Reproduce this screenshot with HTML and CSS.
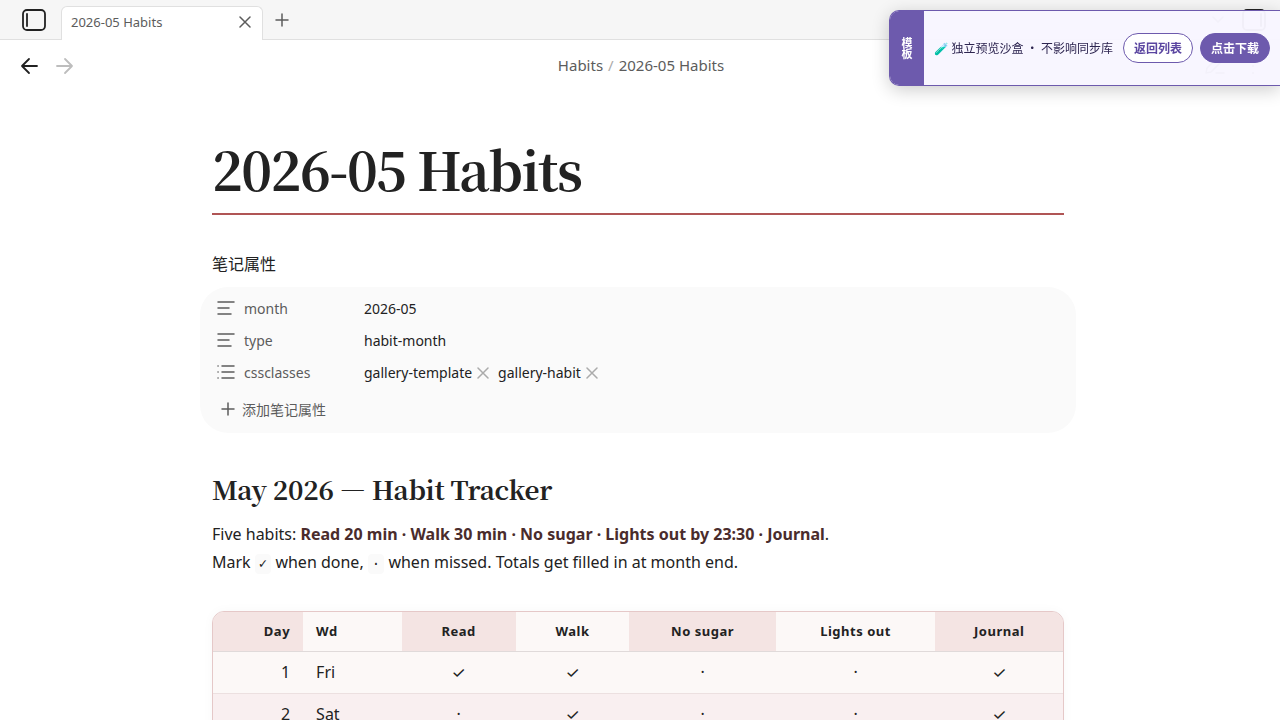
FILE: index.html
```html
<!DOCTYPE html>
<html lang="zh-CN">
<head>
    <meta charset="UTF-8">
    <meta name="viewport" content="width=device-width, initial-scale=1.0">
    <title>2026-05 Habits</title>
    <link rel="stylesheet" href="styles.css">
</head>
<body>
    <div class="app">
        <header class="tab-bar">
            <button class="icon-btn sidebar-btn" aria-label="Toggle left sidebar">
                <svg class="panel" width="26" height="24" viewBox="0 0 26 24"><rect x="2" y="2" width="22" height="20" rx="4"/><path d="M6 6v12"/></svg>
            </button>
            <div class="tab">
                <span class="tab-title">2026-05 Habits</span>
                <button class="icon-btn" aria-label="Close tab">
                    <svg class="thin" width="12" height="12" viewBox="0 0 12 12"><path d="M1 1l10 10M11 1L1 11"/></svg>
                </button>
            </div>
            <button class="icon-btn new-tab" aria-label="New tab">
                <svg class="thin" width="14" height="14" viewBox="0 0 14 14"><path d="M7 1v12M1 7h12"/></svg>
            </button>
            <div class="tab-bar-right">
                <button class="icon-btn" aria-label="Tab list">
                    <svg class="thin" width="12" height="8" viewBox="0 0 12 8"><path d="M1 1l5 5 5-5"/></svg>
                </button>
                <button class="icon-btn sidebar-btn" aria-label="Toggle right sidebar">
                    <svg class="panel" width="26" height="24" viewBox="0 0 26 24"><rect x="2" y="2" width="22" height="20" rx="4"/><path d="M20 6v12"/></svg>
                </button>
            </div>
        </header>

        <nav class="view-header">
            <div class="nav-buttons">
                <button class="icon-btn" aria-label="Back">
                    <svg class="arrow" width="18" height="18" viewBox="0 0 18 18"><path d="M9 2L2 9l7 7M2 9h15"/></svg>
                </button>
                <button class="icon-btn disabled" aria-label="Forward" disabled>
                    <svg class="arrow" width="18" height="18" viewBox="0 0 18 18"><path d="M9 2l7 7-7 7M16 9H1"/></svg>
                </button>
            </div>
            <div class="breadcrumb"><a href="#">Habits</a><span class="slash">/</span><span>2026-05 Habits</span></div>
            <div class="view-actions">
                <button class="icon-btn" aria-label="Edit">
                    <svg class="thin" width="22" height="18" viewBox="0 0 22 18"><path d="M2 16l1-5L13 1l4 4L7 15zM12 16h8"/></svg>
                </button>
                <button class="icon-btn" aria-label="More options">
                    <svg width="18" height="18" viewBox="0 0 18 18"><path d="M9 2v.1M9 9v.1M9 16v.1"/></svg>
                </button>
            </div>
        </nav>

        <main class="scroller">
            <div class="note">
                <h1>2026-05 Habits</h1>

                <section class="properties">
                    <div class="properties-title">笔记属性</div>
                    <div class="properties-box">
                        <div class="property">
                            <svg class="thin" width="18" height="16" viewBox="0 0 18 16"><path d="M1 1h16M1 7h11M1 13h13"/></svg>
                            <span class="key">month</span>
                            <span>2026-05</span>
                        </div>
                        <div class="property">
                            <svg class="thin" width="18" height="16" viewBox="0 0 18 16"><path d="M1 1h16M1 7h11M1 13h13"/></svg>
                            <span class="key">type</span>
                            <span>habit-month</span>
                        </div>
                        <div class="property">
                            <svg class="thin" width="18" height="16" viewBox="0 0 18 16"><path d="M5 1h12M5 7h12M5 13h12M1 1h.1M1 7h.1M1 13h.1"/></svg>
                            <span class="key">cssclasses</span>
                            <span class="pill">gallery-template
                                <button class="icon-btn" aria-label="Remove gallery-template"><svg class="thin" width="12" height="12" viewBox="0 0 12 12"><path d="M1 1l10 10M11 1L1 11"/></svg></button>
                            </span>
                            <span class="pill">gallery-habit
                                <button class="icon-btn" aria-label="Remove gallery-habit"><svg class="thin" width="12" height="12" viewBox="0 0 12 12"><path d="M1 1l10 10M11 1L1 11"/></svg></button>
                            </span>
                        </div>
                        <button class="add-property">
                            <svg class="thin" width="14" height="14" viewBox="0 0 14 14"><path d="M7 1v12M1 7h12"/></svg>
                            添加笔记属性
                        </button>
                    </div>
                </section>

                <h2>May 2026 — Habit Tracker</h2>
                <p>Five habits: <strong>Read 20 min · Walk 30 min · No sugar · Lights out by 23:30 · Journal</strong>.<br>
                Mark <code>✓</code> when done, <code>·</code> when missed. Totals get filled in at month end.</p>

                <div class="table-wrap">
                    <table>
                        <colgroup>
                            <col class="col-day"><col class="col-wd"><col class="col-read"><col class="col-walk"><col class="col-sugar"><col class="col-lights"><col class="col-journal">
                        </colgroup>
                        <thead>
                            <tr><th>Day</th><th>Wd</th><th>Read</th><th>Walk</th><th>No sugar</th><th>Lights out</th><th>Journal</th></tr>
                        </thead>
                        <tbody>
                            <tr><td>1</td><td>Fri</td><td>✓</td><td>✓</td><td>·</td><td>·</td><td>✓</td></tr>
                            <tr><td>2</td><td>Sat</td><td>·</td><td>✓</td><td>·</td><td>·</td><td>✓</td></tr>
                        </tbody>
                    </table>
                </div>
            </div>
        </main>
    </div>

    <aside class="banner">
        <div class="banner-tag">模板</div>
        <div class="banner-body">
            <span class="banner-text">🧪 独立预览沙盒 · 不影响同步库</span>
            <button class="banner-btn">返回列表</button>
            <button class="banner-btn primary">点击下载</button>
        </div>
    </aside>
</body>
</html>
```

FILE: styles.css
```css
* {
    box-sizing: border-box;
}

body {
    margin: 0;
    font-family: "Noto Sans", Inter, "Noto Sans CJK SC", sans-serif;
    font-size: 16px;
    line-height: 28px;
    color: #222;
    background: #fff;
}

button {
    font-family: inherit;
    cursor: pointer;
}

svg {
    flex: none;
    fill: none;
    stroke: currentColor;
    stroke-width: 2;
    stroke-linecap: round;
    stroke-linejoin: round;
}

svg.thin {
    stroke-width: 1.5;
}

svg.arrow,
svg.panel {
    stroke-width: 1.8;
}

.icon-btn {
    display: flex;
    align-items: center;
    justify-content: center;
    padding: 0;
    border: none;
    background: none;
    color: #5c5c5c;
}

.app {
    display: flex;
    flex-direction: column;
    height: 100vh;
}

/* tabs */
.tab-bar {
    display: flex;
    flex: none;
    align-items: center;
    height: 40px;
    padding: 0 13px 0 21px;
    background: #f6f6f6;
    box-shadow: inset 0 -1px #e0e0e0;
}

.sidebar-btn {
    color: #222;
}

.tab {
    display: flex;
    align-items: center;
    justify-content: space-between;
    align-self: flex-end;
    width: 202px;
    height: 34px;
    margin-left: 14px;
    padding: 0 11px 3px 9px;
    border: 1px solid #e0e0e0;
    border-bottom: none;
    border-radius: 6px 6px 0 0;
    background: #fff;
}

.tab-title {
    font-size: 13px;
    color: #5c5c5c;
}

.new-tab {
    margin-left: 12px;
}

.tab-bar-right {
    display: flex;
    gap: 17px;
    margin-left: auto;
}

/* navigation */
.view-header {
    display: grid;
    flex: none;
    grid-template-columns: 1fr auto 1fr;
    align-items: center;
    height: 52px;
    padding: 0 18px 0 20px;
}

.nav-buttons,
.view-actions {
    display: flex;
    gap: 18px;
}

.view-actions {
    justify-content: flex-end;
}

.nav-buttons .icon-btn {
    color: #222;
}

.nav-buttons .disabled {
    color: #bdbdbd;
}

.breadcrumb {
    padding-bottom: 2px;
    font-size: 15px;
    color: #5c5c5c;
}

.breadcrumb a {
    color: inherit;
    text-decoration: none;
}

.slash {
    margin: 0 5px;
    color: #ababab;
}

/* note */
.scroller {
    flex: 1;
    min-height: 0;
    padding: 44px 36px 0 32px;
    overflow-y: auto;
    scrollbar-width: none;
}

.note {
    max-width: 852px;
    margin: 0 auto;
}

h1,
h2 {
    font-family: "Noto Serif CJK SC", "Liberation Serif", serif;
    font-weight: 700;
}

h1 {
    margin: 0 0 35px;
    padding-bottom: 11px;
    border-bottom: 2px solid #b05555;
    font-size: 52px;
    line-height: 66px;
    letter-spacing: -0.03em;
}

h2 {
    margin: 38px 0 13px;
    font-size: 26px;
    line-height: 36px;
    letter-spacing: -0.01em;
}

p {
    margin: 0;
}

strong {
    color: #4a2c2c;
}

code {
    padding: 2px 4px;
    border-radius: 4px;
    background: #fafafa;
    font-family: "Liberation Mono", monospace;
    font-size: 14px;
}

.properties-box {
    margin: 9px -12px 0;
    padding: 6px 16px;
    border-radius: 28px;
    background: #fafafa;
    font-size: 14px;
}

.property {
    display: flex;
    align-items: center;
    height: 32px;
    padding-left: 1px;
}

.property > svg {
    color: #5c5c5c;
}

.key {
    width: 120px;
    margin-left: 9px;
    color: #5c5c5c;
}

.pill {
    display: flex;
    gap: 5px;
    margin-right: 9px;
}

.pill .icon-btn {
    color: #ababab;
}

.add-property {
    display: flex;
    align-items: center;
    gap: 7px;
    height: 32px;
    margin: 4px 0 2px;
    padding: 0 5px;
    border: none;
    background: none;
    font-size: 14px;
    color: #5c5c5c;
}

/* habit table */
.table-wrap {
    margin-top: 33px;
    overflow: hidden;
    border: 1px solid #e5c8c8;
    border-radius: 12px;
    background: #fcf8f7;
    box-shadow: 0 0 12px rgba(0, 0, 0, 0.03);
}

table {
    width: 100%;
    table-layout: fixed;
    border-collapse: collapse;
}

.col-day { width: 10.6%; }
.col-wd { width: 11.6%; }
.col-read,
.col-walk { width: 13.4%; }
.col-sugar { width: 17.2%; }
.col-lights { width: 18.8%; }
.col-journal { width: 15%; }

th,
td {
    padding: 5px 13px;
    border-bottom: 1px solid #ece0e0;
    text-align: center;
}

th {
    height: 39px;
    border-color: #e0dada;
    font-size: 13px;
    letter-spacing: 0.04em;
}

td {
    height: 42px;
}

th:nth-child(odd) {
    background: #f4e4e3;
}

th:first-child,
td:first-child {
    text-align: right;
}

th:nth-child(2),
td:nth-child(2) {
    text-align: left;
}

tbody tr:nth-child(even) {
    background: #f9eff0;
}

/* preview banner */
.banner {
    position: fixed;
    top: 10px;
    right: 0;
    display: flex;
    height: 76px;
    border: 1px solid #6d5aad;
    border-right: none;
    border-radius: 10px 0 0 10px;
    overflow: hidden;
    background: rgba(248, 246, 255, 0.97);
    box-shadow: 0 4px 18px rgba(0, 0, 0, 0.2);
    font-family: "Noto Sans CJK SC", sans-serif;
    font-size: 12px;
}

.banner-tag {
    display: flex;
    align-items: center;
    justify-content: center;
    width: 34px;
    background: #6d5aad;
    color: #fff;
    font-size: 11px;
    font-weight: 700;
    line-height: 12px;
    writing-mode: vertical-rl;
}

.banner-body {
    display: flex;
    align-items: center;
    gap: 7px;
    padding: 0 10px;
}

.banner-text {
    margin-right: 3px;
    color: #2d2550;
}

.banner-btn {
    height: 30px;
    padding: 0 10px 2px;
    border: 1px solid #6d5aad;
    border-radius: 15px;
    background: #fff;
    color: #5a45a0;
    font-size: 12px;
    font-weight: 700;
}

.banner-btn.primary {
    background: #6d5aad;
    color: #fff;
}
```
